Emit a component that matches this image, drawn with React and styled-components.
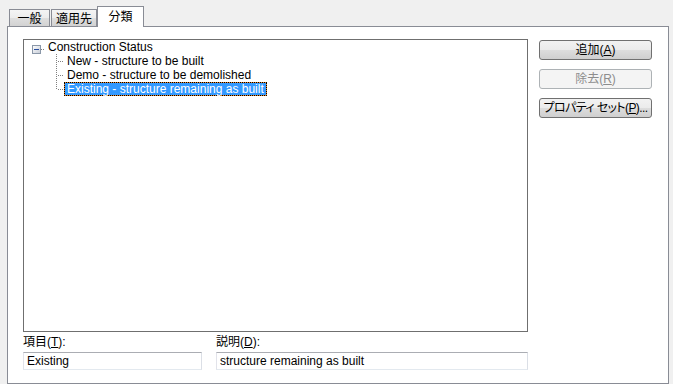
import React from 'react';
import styled, { createGlobalStyle } from 'styled-components';

const Global = createGlobalStyle`
  html, body { margin: 0; padding: 0; background: #f0f0f0; }
  body {
    font-family: "Liberation Sans", "Noto Sans CJK JP", Arial, sans-serif;
    font-size: 12px;
    color: #000;
    font-feature-settings: "palt";
  }
`;

const Window = styled.div`
  width: 673px;
  height: 384px;
  box-sizing: border-box;
  padding-left: 7px;
  background: #f0f0f0;
  display: flex;
  flex-direction: column;
  overflow: hidden;
`;

const TabStrip = styled.div`
  display: flex;
  align-items: flex-end;
  height: 26px;
  padding-left: 2px;
  position: relative;
  z-index: 1;
`;

const Tab = styled.div`
  box-sizing: border-box;
  width: ${(p) => p.$w}px;
  height: ${(p) => (p.$active ? 21 : 17)}px;
  margin-right: ${(p) => p.$gap || 0}px;
  margin-bottom: ${(p) => (p.$active ? -1 : 0)}px;
  border: 1px solid #898c95;
  border-bottom: none;
  background: ${(p) =>
    p.$active ? '#ffffff' : 'linear-gradient(#f4f4f4, #ececec 50%, #dedede 50%, #d2d2d2)'};
  display: flex;
  align-items: center;
  justify-content: center;
  padding-bottom: ${(p) => (p.$active ? 3 : 0)}px;
  font-family: "Noto Sans CJK JP", sans-serif;
  font-size: 12px;
  line-height: 1;
`;

const Panel = styled.div`
  box-sizing: border-box;
  width: 662px;
  height: 358px;
  border: 1px solid #898c95;
  background: #ffffff;
  padding: 12px 0 0 15px;
  display: grid;
  grid-template-columns: 505px 113px;
  column-gap: 11px;
  align-items: start;
`;

const LeftColumn = styled.div`
  display: flex;
  flex-direction: column;
`;

const TreeBox = styled.div`
  box-sizing: border-box;
  height: 293px;
  border: 1px solid #6f6f6f;
  background: #fff;
  overflow: hidden;
`;

const RootRow = styled.div`
  height: 14px;
  display: flex;
  align-items: flex-start;
  padding-left: 8px;
`;

const Expander = styled.svg`
  display: block;
  margin-top: 5px;
  flex: none;
`;

const RootConnector = styled.svg`
  display: block;
  flex: none;
`;

const Children = styled.div`
  margin-left: 32px;
  display: flex;
  flex-direction: column;
`;

const ChildRow = styled.div`
  height: 14px;
  display: flex;
  align-items: flex-start;
`;

const Connector = styled.svg`
  display: block;
  flex: none;
`;

const NodeLabel = styled.span`
  box-sizing: border-box;
  height: 14px;
  line-height: 12px;
  padding: 0 2px;
  border: 1px ${(p) => (p.$selected ? 'dotted #000' : 'solid transparent')};
  white-space: nowrap;
  color: ${(p) => (p.$selected ? '#fff' : '#000')};
  background: ${(p) =>
    p.$selected
      ? 'linear-gradient(#3399ff, #3399ff) padding-box, #ef8a2a border-box'
      : 'transparent'};
`;

const Fields = styled.div`
  display: grid;
  grid-template-columns: 179px 312px;
  column-gap: 14px;
  margin-top: 3px;
`;

const Field = styled.div`
  display: flex;
  flex-direction: column;
  gap: 3px;
`;

const FieldLabel = styled.label`
  height: 14px;
  line-height: 14px;
  white-space: nowrap;
`;

const TextBox = styled.div`
  box-sizing: border-box;
  height: 18px;
  border: 1px solid;
  border-color: #abadb3 #dbdfe6 #e3e9ef #e2e3ea;
  padding: 0 3px;
  line-height: 16px;
  background: #fff;
  white-space: nowrap;
  overflow: hidden;
`;

const ButtonColumn = styled.div`
  display: flex;
  flex-direction: column;
  gap: 9px;
  padding-top: 1px;
`;

const Button = styled.div`
  box-sizing: border-box;
  height: 20px;
  border: 1px solid ${(p) => (p.$disabled ? '#adb2b5' : '#707070')};
  border-radius: 3px;
  background: ${(p) =>
    p.$disabled
      ? '#f4f4f4'
      : 'linear-gradient(#f2f2f2, #ebebeb 50%, #dddddd 50%, #cfcfcf)'};
  color: ${(p) => (p.$disabled ? '#8d8d8d' : '#000')};
  display: flex;
  align-items: center;
  justify-content: center;
  line-height: 1;
  white-space: nowrap;
  letter-spacing: ${(p) => (p.$tight ? '-0.6px' : '0')};
  overflow: hidden;
`;

const Key = styled.u`
  text-decoration: underline;
  text-underline-offset: 1px;
`;

const TreeConnector = ({ last }) => (
  <Connector width="8" height="14" viewBox="0 0 8 14">
    <line
      x1="0.5"
      y1="0"
      x2="0.5"
      y2={last ? 8 : 14}
      stroke="#808080"
      strokeWidth="1"
      strokeDasharray="1 1"
    />
    <line x1="2" y1="7.5" x2="8" y2="7.5" stroke="#808080" strokeWidth="1" strokeDasharray="1 1" />
  </Connector>
);

const children = [
  'New - structure to be built',
  'Demo - structure to be demolished',
  'Existing - structure remaining as built',
];

export default function App() {
  return (
    <>
      <Global />
      <Window>
        <TabStrip>
          <Tab $w={41} $gap={1}>一般</Tab>
          <Tab $w={46}>適用先</Tab>
          <Tab $w={47} $active>分類</Tab>
        </TabStrip>
        <Panel>
          <LeftColumn>
            <TreeBox>
              <RootRow>
                <Expander width="9" height="9" viewBox="0 0 9 9">
                  <defs>
                    <linearGradient id="exg" x1="0" y1="0" x2="1" y2="1">
                      <stop offset="0" stopColor="#ffffff" />
                      <stop offset="1" stopColor="#c6ccd6" />
                    </linearGradient>
                  </defs>
                  <rect x="0.5" y="0.5" width="8" height="8" fill="url(#exg)" stroke="#8a97a8" />
                  <line x1="2" y1="4.5" x2="7" y2="4.5" stroke="#2a4f9f" strokeWidth="1" />
                </Expander>
                <RootConnector width="4" height="14" viewBox="0 0 4 14">
                  <line x1="0" y1="9.5" x2="4" y2="9.5" stroke="#808080" strokeDasharray="1 1" />
                </RootConnector>
                <NodeLabel>Construction Status</NodeLabel>
              </RootRow>
              <Children>
                {children.map((c, i) => (
                  <ChildRow key={c}>
                    <TreeConnector last={i === children.length - 1} />
                    <NodeLabel $selected={i === children.length - 1}>{c}</NodeLabel>
                  </ChildRow>
                ))}
              </Children>
            </TreeBox>
            <Fields>
              <Field>
                <FieldLabel>
                  項目(<Key>T</Key>):
                </FieldLabel>
                <TextBox>Existing</TextBox>
              </Field>
              <Field>
                <FieldLabel>
                  説明(<Key>D</Key>):
                </FieldLabel>
                <TextBox>structure remaining as built</TextBox>
              </Field>
            </Fields>
          </LeftColumn>
          <ButtonColumn>
            <Button>
              追加(<Key>A</Key>)
            </Button>
            <Button $disabled>
              除去(<Key>R</Key>)
            </Button>
            <Button $tight>
              プロパティ セット(<Key>P</Key>)...
            </Button>
          </ButtonColumn>
        </Panel>
      </Window>
    </>
  );
}
